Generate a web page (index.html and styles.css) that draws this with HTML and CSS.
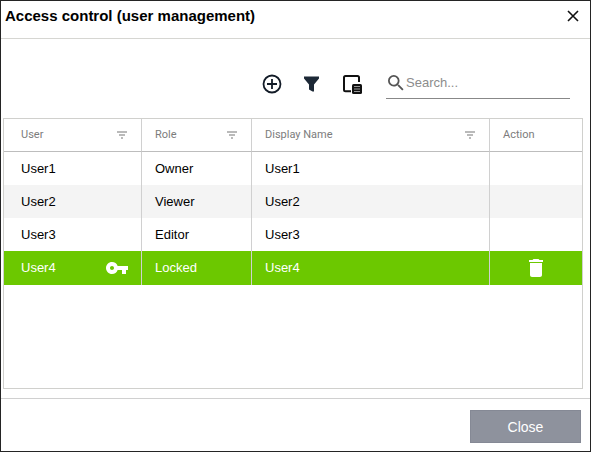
FILE: index.html
```html
<!DOCTYPE html>
<html lang="en">
<head>
<meta charset="utf-8">
<title>Access control (user management)</title>
<link rel="stylesheet" href="styles.css">
</head>
<body>
<main class="dialog">
  <header class="dialog-header">
    <h1 class="dialog-title">Access control (user management)</h1>
    <button class="icon-button" type="button" aria-label="Close dialog">
      <svg width="12" height="12" viewBox="0 0 12 12"><path d="M1 1l10 10M11 1L1 11" fill="none" stroke="#111" stroke-width="1.6"/></svg>
    </button>
  </header>

  <div class="toolbar">
    <div class="tools">
      <button class="icon-button" type="button" aria-label="Add user">
        <svg width="20" height="20" viewBox="0 0 20 20" fill="none" stroke="#131c28" stroke-width="1.8"><circle cx="10" cy="10" r="8.5"/><path d="M10 5v10M5 10h10"/></svg>
      </button>
      <button class="icon-button" type="button" aria-label="Filter">
        <svg width="20" height="20" viewBox="0 0 20 20"><path d="M2 2.500h15v2l-5 6v7h-1.500L7 15.500v-5l-5-6z" fill="#1c2836"/></svg>
      </button>
      <button class="icon-button" type="button" aria-label="Choose columns">
        <svg width="20" height="20" viewBox="0 0 20 20"><path d="M9 17.200H3.500Q2 17.200 2 15.700V3.500Q2 2 3.500 2H15.500Q17 2 17 3.500V8" fill="none" stroke="#111" stroke-width="2"/><rect x="10" y="10" width="10" height="10" rx="1.500" fill="#111"/><path d="M12 12.500h6M12 15h6M12 17.500h6" stroke="#999" stroke-width="1"/></svg>
      </button>
    </div>
    <label class="search">
      <svg width="16" height="16" viewBox="3 3 18 18"><path fill="#555" d="M15.500 14h-.79l-.28-.27A6.471 6.471 0 0 0 16 9.500 6.500 6.500 0 1 0 9.500 16c1.610 0 3.090-.59 4.230-1.570l.27.28v.79l5 4.990L20.490 19l-4.990-5zm-6 0C7.010 14 5 11.990 5 9.500S7.010 5 9.500 5 14 7.010 14 9.500 11.990 14 9.500 14z"/></svg>
      <input class="search-input" type="search" placeholder="Search..." aria-label="Search users">
    </label>
  </div>

  <div class="grid">
    <table class="users">
      <colgroup><col class="col-user"><col class="col-role"><col><col class="col-action"></colgroup>
      <thead>
        <tr>
          <th scope="col"><div class="cell">User <button class="icon-button" type="button" aria-label="Filter by user"><svg width="12" height="8" viewBox="0 0 12 8"><path d="M1 1h10M3 4h6M5 7h2" stroke="#a4a4a4" stroke-width="1.500"/></svg></button></div></th>
          <th scope="col"><div class="cell">Role <button class="icon-button" type="button" aria-label="Filter by role"><svg width="12" height="8" viewBox="0 0 12 8"><path d="M1 1h10M3 4h6M5 7h2" stroke="#a4a4a4" stroke-width="1.500"/></svg></button></div></th>
          <th scope="col"><div class="cell">Display Name <button class="icon-button" type="button" aria-label="Filter by display name"><svg width="12" height="8" viewBox="0 0 12 8"><path d="M1 1h10M3 4h6M5 7h2" stroke="#a4a4a4" stroke-width="1.500"/></svg></button></div></th>
          <th scope="col">Action</th>
        </tr>
      </thead>
      <tbody>
        <tr><td>User1</td><td>Owner</td><td>User1</td><td></td></tr>
        <tr><td>User2</td><td>Viewer</td><td>User2</td><td></td></tr>
        <tr><td>User3</td><td>Editor</td><td>User3</td><td></td></tr>
        <tr class="selected">
          <td><div class="cell">User4 <button class="icon-button" type="button" aria-label="Reset password"><svg width="22" height="12" viewBox="1 6 22 12"><path fill="#fff" d="M12.650 10A5.990 5.990 0 0 0 7 6c-3.310 0-6 2.690-6 6s2.690 6 6 6a5.990 5.990 0 0 0 5.650-4H17v4h4v-4h2v-4H12.650zM7 14c-1.100 0-2-.9-2-2s.9-2 2-2 2 .9 2 2-.9 2-2 2z"/></svg></button></div></td>
          <td>Locked</td>
          <td>User4</td>
          <td class="action"><button class="icon-button" type="button" aria-label="Delete user"><svg width="14" height="18" viewBox="5 3 14 18"><path fill="#fff" d="M6 19c0 1.100.9 2 2 2h8c1.100 0 2-.9 2-2V7H6v12zM19 4h-3.500l-1-1h-5l-1 1H5v2h14V4z"/></svg></button></td>
        </tr>
      </tbody>
    </table>
  </div>

  <footer class="dialog-footer">
    <button class="close-button" type="button">Close</button>
  </footer>
</main>
</body>
</html>
```

FILE: styles.css
```css
* {
  box-sizing: border-box;
}

body {
  margin: 0;
  font: 13px/16px "Liberation Sans", Arial, sans-serif;
  color: #000;
  background: #fff;
}

.dialog {
  display: flex;
  flex-direction: column;
  min-height: 100vh;
  border: 1px solid #242424;
}

.icon-button {
  display: flex;
  padding: 0;
  border: 0;
  background: none;
  cursor: pointer;
}

.dialog-header {
  display: flex;
  align-items: center;
  justify-content: space-between;
  padding: 7px 11px 14px 4px;
  border-bottom: 1px solid #d6d6d2;
}

.dialog-title {
  margin: 0;
  font-size: 15px;
  line-height: 16px;
}

.toolbar {
  display: flex;
  justify-content: flex-end;
  align-items: center;
  gap: 24px;
  padding: 29px 20px 19px;
}

.tools {
  display: flex;
  gap: 20px;
}

.search {
  display: flex;
  align-items: center;
  gap: 2px;
  width: 184px;
  height: 31px;
  padding-left: 2px;
  border-bottom: 1px solid #888;
}

.search-input {
  flex: 1;
  min-width: 0;
  padding: 0;
  border: 0;
  outline: 0;
  background: none;
  font: 13px/16px "Liberation Sans", Arial, sans-serif;
}

.search-input::placeholder {
  color: #8c8c8c;
}

.grid {
  flex: 1;
  margin: 0 7px 9px 2px;
  border: 1px solid #d0d0cd;
}

.users {
  width: 100%;
  table-layout: fixed;
  border-collapse: separate;
  border-spacing: 0;
}

.col-user {
  width: 138px;
}

.col-role {
  width: 110px;
}

.col-action {
  width: 92px;
}

.users th,
.users td {
  height: 33px;
  padding: 0 13px;
  border-right: 1px solid #d0d0d0;
  text-align: left;
}

.users th {
  border-bottom: 1px solid #bdbdbd;
  font: 11px/16px Roboto, sans-serif;
  color: #7c7c7c;
}

.users th:first-child,
.users td:first-child {
  padding-left: 17px;
}

.users th:last-child,
.users td:last-child {
  border-right: 0;
}

.users tbody tr:nth-child(even) {
  background: #f4f4f4;
}

.users tbody tr.selected {
  background: #6cc800;
  color: #fff;
}

.users .selected td {
  height: 34px;
}

.cell {
  display: flex;
  align-items: center;
  justify-content: space-between;
}

.action .icon-button {
  margin: 0 auto;
}

.dialog-footer {
  display: flex;
  justify-content: flex-end;
  padding: 11px 9px 8px;
  border-top: 1px solid #d0d0d0;
}

.close-button {
  width: 111px;
  height: 33px;
  padding: 0;
  border: 1px solid #858995;
  background: #8e929d;
  color: #fff;
  font: 14px/16px "Liberation Sans", Arial, sans-serif;
}
```
